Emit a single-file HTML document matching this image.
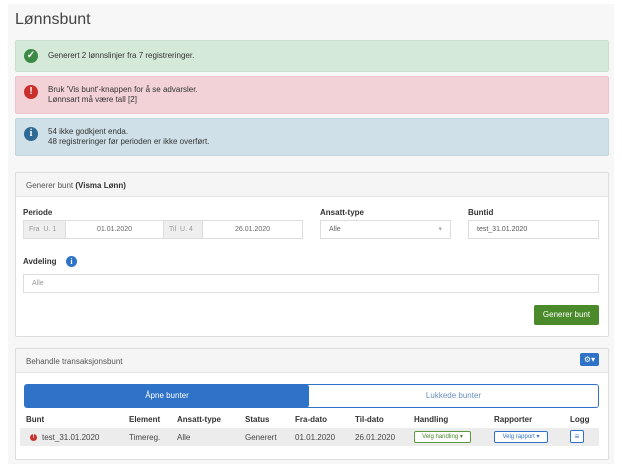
<!DOCTYPE html>
<html><head><meta charset="utf-8"><style>
*{box-sizing:border-box;margin:0;padding:0}
body{width:622px;height:464px;overflow:hidden;background:#fff;font-family:"Liberation Sans",sans-serif;font-size:8px;color:#333;position:relative}
.a{position:absolute}
.wrap{position:absolute;left:8px;top:4px;width:606px;height:460px;background:#f7f7f7}
.alert{position:absolute;left:15px;width:594px;border-radius:2px;font-size:8px;line-height:10px}
.ic{position:absolute;left:8px;width:14px;height:14px;border-radius:50%;color:#fff;font-weight:bold;text-align:center;line-height:14px;font-size:10px}
.panel{position:absolute;left:15px;width:594px;background:#fff;border:1px solid #ddd;border-radius:2px}
.ph{height:24px;background:#f5f5f5;border-bottom:1px solid #e3e3e3;padding:8px 10px;font-size:8px;color:#555}
.lbl{position:absolute;font-weight:bold;font-size:8px;color:#333}
.inp{position:absolute;border:1px solid #ddd;background:#fff;height:19px;font-size:7px;color:#666;line-height:17px;padding-left:8px}
.add{position:absolute;background:#eee;border:1px solid #ddd;height:19px;font-size:7px;color:#999;line-height:17px;padding-left:5px}
th{font-weight:bold;text-align:left;font-size:8px;padding:0}
</style></head><body>
<div class="wrap"></div>
<div class="a" style="left:15px;top:11px;font-size:16px;color:#444">Lønnsbunt</div>

<div class="alert" style="top:40px;height:32px;background:#d5e9d8;border:1px solid #c8e0cb">
<div class="ic" style="top:8px;background:#3b8a45">✓</div>
<div class="a" style="left:32px;top:10px">Generert 2 lønnslinjer fra 7 registreringer.</div></div>
<div class="alert" style="top:76px;height:38px;background:#f2d2d7;border:1px solid #ecc6cc">
<div class="ic" style="top:8px;background:#c9302c">!</div>
<div class="a" style="left:32px;top:8px">Bruk 'Vis bunt'-knappen for å se advarsler.<br>Lønnsart må være tall [2]</div></div>
<div class="alert" style="top:118px;height:38px;background:#cfe0e8;border:1px solid #c1d6e0">
<div class="ic" style="top:8px;background:#2f6a96;font-family:'Liberation Serif',serif">i</div>
<div class="a" style="left:32px;top:8px">54 ikke godkjent enda.<br>48 registreringer før perioden er ikke overført.</div></div>

<div class="panel" style="top:172px;height:165px">
<div class="ph">Generer bunt <b style="color:#333">(Visma Lønn)</b></div></div>
<div class="lbl" style="left:23px;top:208px">Periode</div>
<div class="add" style="left:23px;top:220px;width:43px">Fra &nbsp;U. 1</div>
<div class="inp" style="left:65px;top:220px;width:99px;text-align:center;padding:0">01.01.2020</div>
<div class="add" style="left:163px;top:220px;width:40px">Til &nbsp;U. 4</div>
<div class="inp" style="left:202px;top:220px;width:101px;text-align:center;padding:0">26.01.2020</div>
<div class="lbl" style="left:320px;top:208px">Ansatt-type</div>
<div class="inp" style="left:320px;top:220px;width:131px">Alle<span style="position:absolute;right:8px;color:#aaa">▾</span></div>
<div class="lbl" style="left:468px;top:208px">Buntid</div>
<div class="inp" style="left:468px;top:220px;width:131px;color:#555">test_31.01.2020</div>
<div class="lbl" style="left:23px;top:257px">Avdeling</div>
<div class="a" style="left:66px;top:256px;width:11px;height:11px;border-radius:50%;background:#2f73c9;color:#fff;font-size:8px;font-weight:bold;text-align:center;line-height:11px;font-family:'Liberation Serif',serif">i</div>
<div class="inp" style="left:23px;top:274px;width:576px;color:#999">Alle</div>
<div class="a" style="left:534px;top:305px;width:65px;height:20px;background:#4a8a2a;border-radius:2px;color:#fff;font-size:8px;text-align:center;line-height:20px">Generer bunt</div>

<div class="panel" style="top:348px;height:112px">
<div class="ph">Behandle transaksjonsbunt</div></div>
<div class="a" style="left:580px;top:353px;width:19px;height:13px;background:#2f73c9;border-radius:2px;color:#fff;font-size:8px;text-align:center;line-height:13px">⚙▾</div>
<div class="a" style="left:24px;top:384px;width:575px;height:24px;border:1px solid #2f73c9;border-radius:3px;background:#fff"></div>
<div class="a" style="left:25px;top:385px;width:284px;height:22px;background:#2f73c9;border-radius:2px;color:#fff;text-align:center;line-height:22px;font-size:8px">Åpne bunter</div>
<div class="a" style="left:309px;top:385px;width:289px;height:22px;color:#6a8fbf;text-align:center;line-height:22px;font-size:8px">Lukkede bunter</div>
<div class="a" style="left:20px;top:428px;width:579px;height:18px;background:#ececec"></div>
<div class="a" style="top:415px;left:0;width:622px;font-weight:bold;font-size:8px">
<span class="a" style="left:26px">Bunt</span><span class="a" style="left:129px">Element</span><span class="a" style="left:177px">Ansatt-type</span><span class="a" style="left:245px">Status</span><span class="a" style="left:295px">Fra-dato</span><span class="a" style="left:355px">Til-dato</span><span class="a" style="left:414px">Handling</span><span class="a" style="left:494px">Rapporter</span><span class="a" style="left:570px">Logg</span></div>
<div class="a" style="top:433px;left:0;width:622px;font-size:8px;color:#444">
<span class="a" style="left:30px;top:1px;width:7px;height:7px;border-radius:50%;background:#c9302c;color:#fff;font-size:6px;text-align:center;line-height:7px;font-weight:bold">!</span>
<span class="a" style="left:42px">test_31.01.2020</span><span class="a" style="left:129px">Timereg.</span><span class="a" style="left:177px">Alle</span><span class="a" style="left:245px">Generert</span><span class="a" style="left:295px">01.01.2020</span><span class="a" style="left:355px">26.01.2020</span></div>
<div class="a" style="left:414px;top:431px;width:57px;height:12px;border:1px solid #5a9a3a;background:#fff;font-size:6px;color:#4a8a2a;line-height:10px;text-align:center;border-radius:2px">Velg handling ▾</div>
<div class="a" style="left:494px;top:431px;width:54px;height:12px;border:1px solid #2f73c9;background:#fff;font-size:6px;color:#2f73c9;line-height:10px;text-align:center;border-radius:2px">Velg rapport ▾</div>
<div class="a" style="left:570px;top:430px;width:14px;height:13px;border:1px solid #2f73c9;background:#fff;border-radius:2px;color:#2f73c9;font-size:8px;text-align:center;line-height:11px">≡</div>
</body></html>
